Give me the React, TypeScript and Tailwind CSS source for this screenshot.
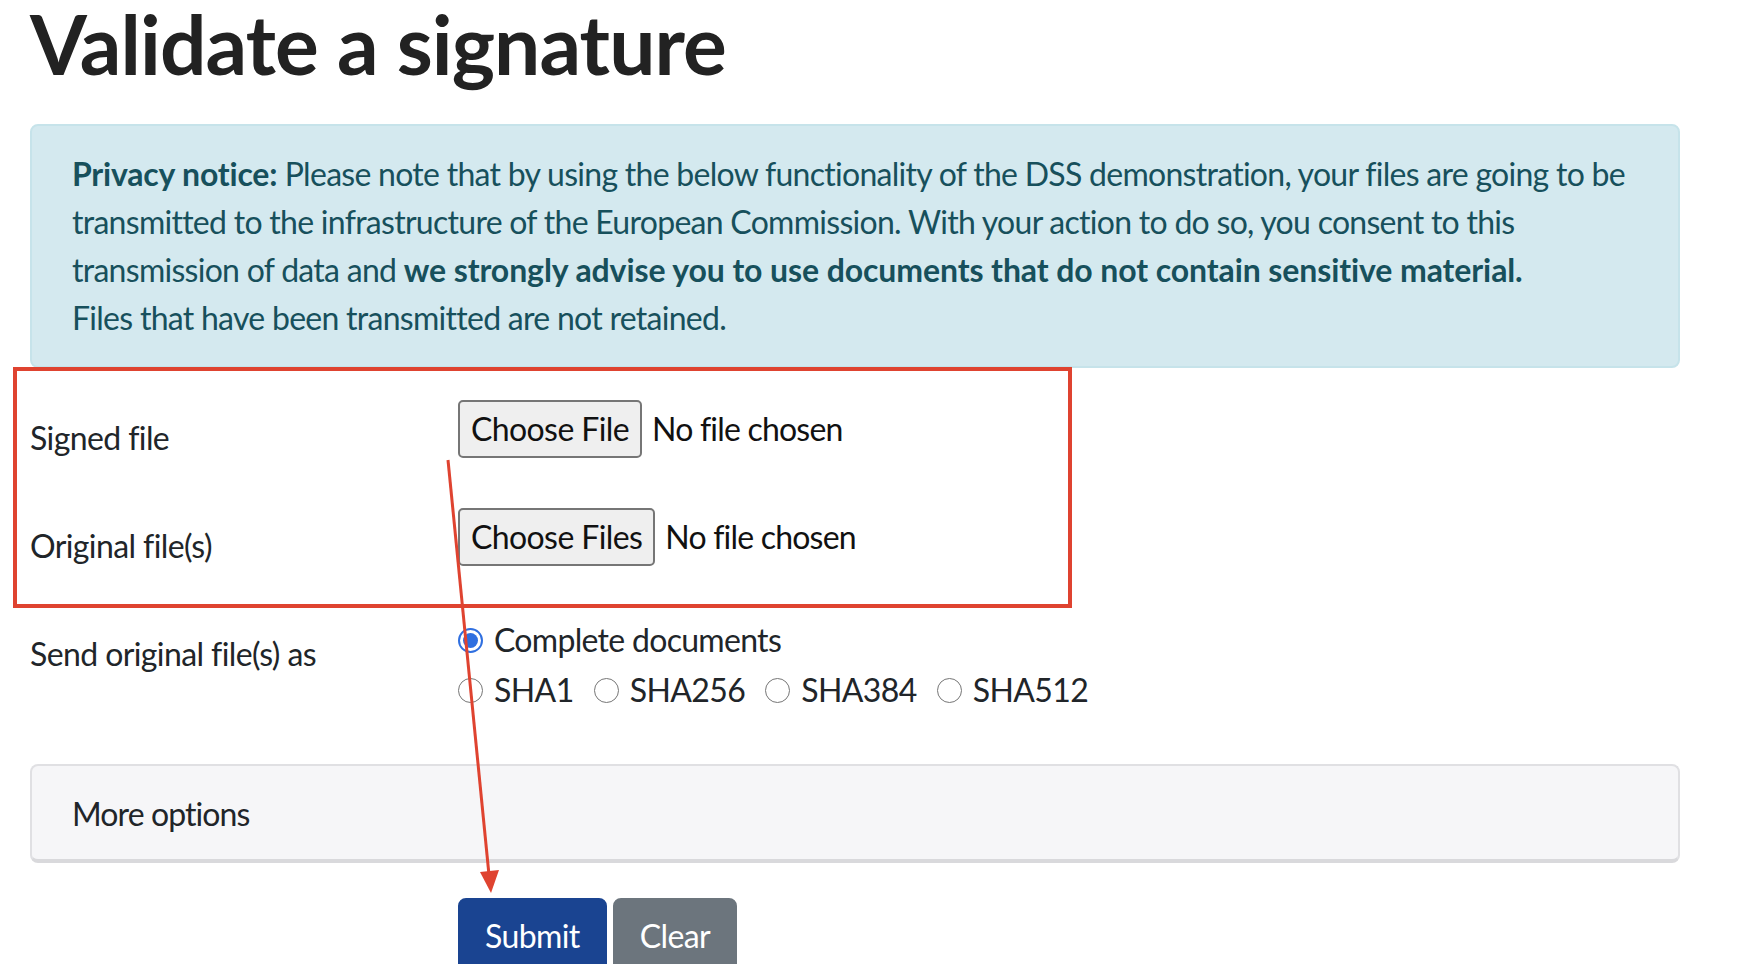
import React from "react";

const Radio = ({ checked = false }: { checked?: boolean }) => {
  return checked ? (
    <span className="flex items-center justify-center w-[25px] h-[25px] rounded-full border-[2px] border-[#2f6fe0] bg-white shrink-0">
      <span className="block w-[15px] h-[15px] rounded-full bg-[#2f6fe0]" />
    </span>
  ) : (
    <span className="block w-[25px] h-[25px] rounded-full border-[1.5px] border-[#767676] bg-white shrink-0" />
  );
};

const FileInput = ({ label }: { label: string }) => {
  return (
    <div className="flex items-center">
      <button
        type="button"
        className="h-[58px] px-[11px] border-2 border-[#767676] rounded-[5px] bg-[#efefef] text-[#111] leading-none tracking-[-0.6px]"
      >
        {label}
      </button>
      <span className="ml-[10px] text-[#111] tracking-[-0.8px]">No file chosen</span>
    </div>
  );
};

const Arrow = () => {
  return (
    <svg
      className="absolute left-0 top-0 pointer-events-none"
      width="1748"
      height="964"
      viewBox="0 0 1748 964"
    >
      <line x1="448" y1="460" x2="489" y2="875" stroke="#df4330" strokeWidth="3" />
      <polygon points="491,893 480,872 499,870" fill="#df4330" />
    </svg>
  );
};

const App = () => {
  return (
    <div className="relative w-[1748px] h-[964px] overflow-hidden bg-white font-['Lato',sans-serif] text-[32px] leading-[48px] tracking-[-0.6px] text-[#212529]">
      <div className="ml-[30px] w-[1650px]">
        <h1 className="pt-[2px] text-[82px] leading-none font-bold tracking-[-0.9px] text-[#222]">
          Validate a signature
        </h1>

        <div className="mt-[40px] rounded-[8px] border-2 border-[#c6e3ea] bg-[#d4e9ef] px-[40px] py-[24px] text-[#17505c] tracking-[-0.72px] whitespace-nowrap">
          <b className="tracking-[-0.2px]">Privacy notice:</b> Please note that by using the below functionality of the DSS demonstration, your files are going to be
          <br />
          transmitted to the infrastructure of the European Commission. With your action to do so, you consent to this
          <br />
          transmission of data and{" "}
          <b className="tracking-[-0.1px]">we strongly advise you to use documents that do not contain sensitive material.</b>
          <br />
          Files that have been transmitted are not retained.
        </div>

        <form className="mt-[32px]">
          <div className="flex items-start mb-[32px]">
            <label className="w-[428px] pt-[14px] pb-[14px]">Signed file</label>
            <FileInput label="Choose File" />
          </div>

          <div className="flex items-start mb-[32px]">
            <label className="w-[428px] pt-[14px] pb-[14px]">Original file(s)</label>
            <FileInput label="Choose Files" />
          </div>

          <div className="flex items-start">
            <label className="w-[428px] pt-[14px]">Send original file(s) as</label>
            <div className="flex flex-col">
              <div className="flex items-center h-[48px]">
                <Radio checked />
                <span className="ml-[11px] tracking-[-0.7px]">Complete documents</span>
              </div>
              <div className="flex items-center h-[48px] mt-[2px]">
                {["SHA1", "SHA256", "SHA384", "SHA512"].map((alg) => (
                  <div key={alg} className="flex items-center mr-[20px]">
                    <Radio />
                    <span className="ml-[11px]">{alg}</span>
                  </div>
                ))}
              </div>
            </div>
          </div>

          <div className="mt-[50px] rounded-[8px] border-2 border-b-4 border-[#e0e0e3] border-b-[#d9d9dc] bg-[#f6f6f8] px-[40px] pt-[24px] pb-[21px] tracking-[-0.9px]">
            More options
          </div>

          <div className="flex gap-[6px] mt-[35px] ml-[428px]">
            <button
              type="button"
              className="rounded-[8px] border-2 border-[#1a4491] bg-[#1a4491] px-[25px] pt-[12px] pb-[14px] text-white"
            >
              Submit
            </button>
            <button
              type="button"
              className="rounded-[8px] border-2 border-[#6c757d] bg-[#6c757d] px-[25px] pt-[12px] pb-[14px] text-white"
            >
              Clear
            </button>
          </div>
        </form>
      </div>

      {/* annotation overlay */}
      <div className="absolute left-[13px] top-[367px] w-[1059px] h-[241px] border-4 border-[#df4330] pointer-events-none" />
      <Arrow />
    </div>
  );
};

export default App;
